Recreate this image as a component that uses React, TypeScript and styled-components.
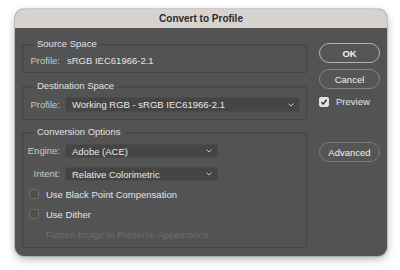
import styled, { createGlobalStyle } from "styled-components";

const GlobalStyle = createGlobalStyle`
  html, body {
    margin: 0;
    background: #ffffff;
  }
  body {
    font-family: "Liberation Sans", Arial, sans-serif;
    -webkit-font-smoothing: antialiased;
  }
`;

const Page = styled.div`
  width: 400px;
  height: 270px;
  padding: 9px 0 0 15px;
  box-sizing: border-box;
`;

const Dialog = styled.div`
  width: 372px;
  height: 247px;
  border-radius: 9px;
  overflow: hidden;
  background: #535353;
  box-shadow: 0 3px 8px rgba(0, 0, 0, 0.3), 0 0 0 1px rgba(0, 0, 0, 0.15);
  display: flex;
  flex-direction: column;
`;

const TitleBar = styled.div`
  flex: none;
  height: 19px;
  background: #d8d2cf;
  color: #2b2b2b;
  font-size: 10px;
  font-weight: 700;
  display: flex;
  align-items: center;
  justify-content: center;
`;

const Body = styled.div`
  display: flex;
  gap: 12px;
  padding: 10px 7px 0 7px;
`;

const MainColumn = styled.div`
  width: 285px;
  display: flex;
  flex-direction: column;
`;

const Group = styled.fieldset<{ $top?: number }>`
  margin: ${(p) => p.$top ?? 0}px 0 0 0;
  padding: 0;
  min-width: 0;
  border: 1px solid #464646;
  box-shadow: inset 1px 1px 0 #4c4c4c;
`;

const Legend = styled.legend`
  margin-left: 10px;
  padding: 0 4px;
  font-size: 9.5px;
  line-height: 12px;
  color: #e2e2e2;
`;

const FormGrid = styled.div<{ $pt: number; $pb: number; $gap?: number }>`
  display: grid;
  grid-template-columns: 33px auto;
  column-gap: 5px;
  row-gap: ${(p) => p.$gap ?? 0}px;
  align-items: center;
  justify-items: start;
  padding: ${(p) => p.$pt}px 7px ${(p) => p.$pb}px 4px;
`;

const Label = styled.span`
  justify-self: end;
  font-size: 9.5px;
  line-height: 12px;
  color: #c9c9c9;
  white-space: nowrap;
`;

const Value = styled.span`
  margin-left: 2px;
  font-size: 9.5px;
  line-height: 12px;
  color: #e4e4e4;
  white-space: nowrap;
`;

const SelectBox = styled.div<{ $w: number; $h: number }>`
  box-sizing: border-box;
  width: ${(p) => p.$w}px;
  height: ${(p) => p.$h}px;
  display: flex;
  align-items: center;
  justify-content: space-between;
  padding: 0 5px 0 6px;
  background: #454545;
  border: 1px solid #4b4b4b;
  border-radius: 3px;
  font-size: 9.5px;
  color: #e8e8e8;
  white-space: nowrap;
`;

const Chevron = () => (
  <svg width="6" height="4" viewBox="0 0 6 4">
    <path d="M0.6 0.6 L3 3 L5.4 0.6" fill="none" stroke="#c4c4c4" strokeWidth="1" />
  </svg>
);

const Select = ({ value, w, h }: { value: string; w: number; h: number }) => (
  <SelectBox $w={w} $h={h}>
    <span>{value}</span>
    <Chevron />
  </SelectBox>
);

const CheckList = styled.div`
  margin-top: 3px;
  padding: 0 0 3px 6px;
  display: flex;
  flex-direction: column;
`;

const CheckRow = styled.div<{ $disabled?: boolean; $h?: number }>`
  height: ${(p) => p.$h ?? 20}px;
  display: flex;
  align-items: center;
  gap: 7px;
  font-size: 9.5px;
  color: ${(p) => (p.$disabled ? "#6c6c6c" : "#e4e4e4")};
  white-space: nowrap;
`;

const Box = styled.span<{ $checked?: boolean; $disabled?: boolean }>`
  box-sizing: border-box;
  width: 10px;
  height: 10px;
  flex: none;
  border-radius: 2px;
  display: flex;
  align-items: center;
  justify-content: center;
  background: ${(p) => (p.$checked ? "#e2e2e2" : p.$disabled ? "#525252" : "#4f4f4f")};
  border: 1px solid
    ${(p) => (p.$checked ? "#e2e2e2" : p.$disabled ? "#5a5a5a" : "#6c6c6c")};
`;

const Check = ({ label, checked, disabled, h }: { label: string; checked?: boolean; disabled?: boolean; h?: number }) => (
  <CheckRow $disabled={disabled} $h={h}>
    <Box $checked={checked} $disabled={disabled}>
      {checked && (
        <svg width="8" height="8" viewBox="0 0 8 8">
          <path d="M1.4 4.2 L3.2 6 L6.6 1.8" fill="none" stroke="#2e2e2e" strokeWidth="1.5" />
        </svg>
      )}
    </Box>
    {label}
  </CheckRow>
);

const SideColumn = styled.div`
  width: 61px;
  display: flex;
  flex-direction: column;
  padding-top: 5px;
`;

const Button = styled.button<{ $primary?: boolean; $top?: number }>`
  box-sizing: border-box;
  margin: ${(p) => p.$top ?? 0}px 0 0 0;
  width: 61px;
  height: 20px;
  padding: 0;
  border-radius: 10px;
  background: #555555;
  border: 1px solid ${(p) => (p.$primary ? "#b4b4b4" : "#858585")};
  color: #f2f2f2;
  font-family: inherit;
  font-size: 9.5px;
  font-weight: ${(p) => (p.$primary ? 700 : 400)};
`;

const PreviewRow = styled.div`
  margin-top: 6px;
`;

const AdvancedButton = styled(Button)`
  border-color: #7a7a7a;
`;

export default function App() {
  return (
    <>
      <GlobalStyle />
      <Page>
        <Dialog>
          <TitleBar>Convert to Profile</TitleBar>
          <Body>
            <MainColumn>
              <Group>
                <Legend>Source Space</Legend>
                <FormGrid $pt={5} $pb={5}>
                  <Label>Profile:</Label>
                  <Value>sRGB IEC61966-2.1</Value>
                </FormGrid>
              </Group>
              <Group $top={7}>
                <Legend>Destination Space</Legend>
                <FormGrid $pt={5} $pb={7}>
                  <Label>Profile:</Label>
                  <Select value="Working RGB - sRGB IEC61966-2.1" w={235} h={15} />
                </FormGrid>
              </Group>
              <Group $top={6}>
                <Legend>Conversion Options</Legend>
                <FormGrid $pt={6} $pb={0} $gap={9}>
                  <Label>Engine:</Label>
                  <Select value="Adobe (ACE)" w={153} h={14} />
                  <Label>Intent:</Label>
                  <Select value="Relative Colorimetric" w={153} h={14} />
                </FormGrid>
                <CheckList>
                  <Check label="Use Black Point Compensation" />
                  <Check label="Use Dither" />
                  <Check label="Flatten Image to Preserve Appearance" disabled />
                </CheckList>
              </Group>
            </MainColumn>
            <SideColumn>
              <Button $primary>OK</Button>
              <Button $top={6}>Cancel</Button>
              <PreviewRow>
                <Check label="Preview" checked h={13} />
              </PreviewRow>
              <AdvancedButton $top={34}>Advanced</AdvancedButton>
            </SideColumn>
          </Body>
        </Dialog>
      </Page>
    </>
  );
}
